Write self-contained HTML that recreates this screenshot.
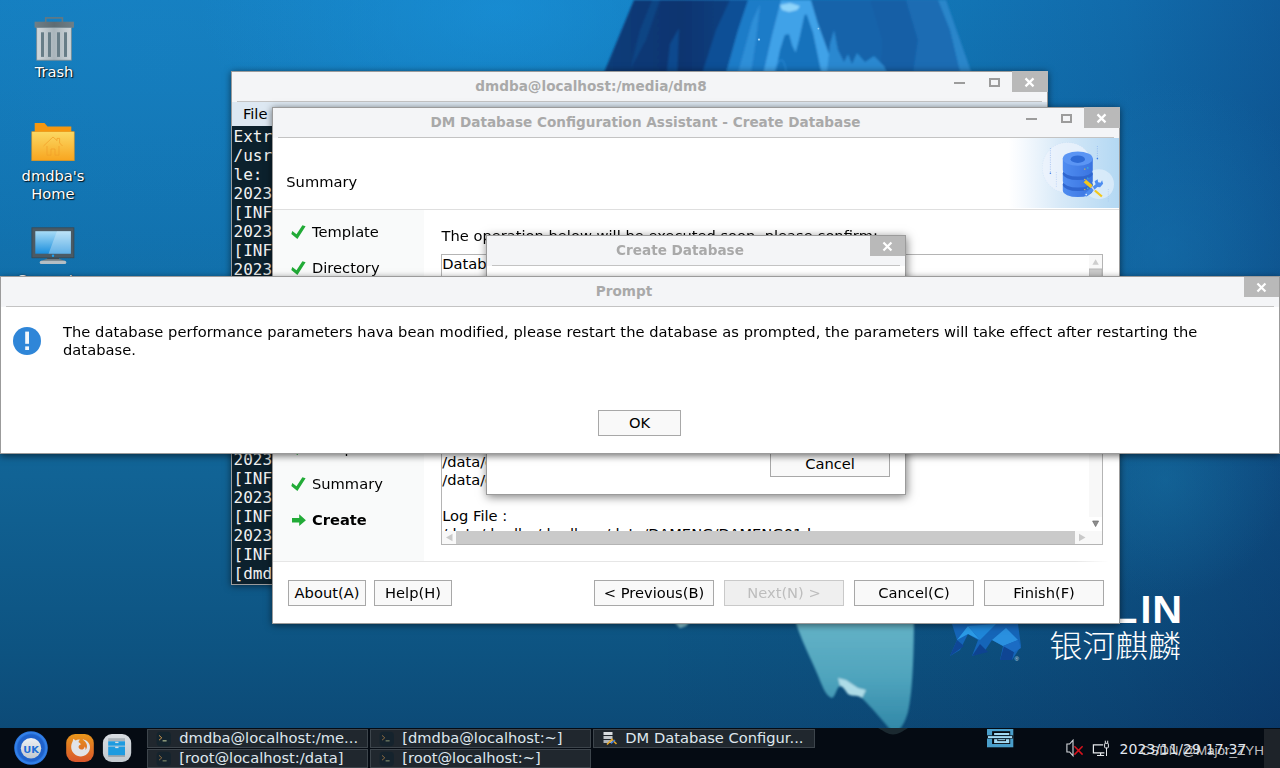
<!DOCTYPE html>
<html lang="en">
<head>
<meta charset="utf-8">
<title>Kylin Desktop - DM Database Configuration Assistant</title>
<style>
*{box-sizing:border-box;margin:0;padding:0}
html,body{width:1280px;height:768px;overflow:hidden}
body{position:relative;font-family:"DejaVu Sans","Liberation Sans",sans-serif;font-size:14.67px;color:#000;background:#0d5a92}
.abs{position:absolute}
#wall{position:absolute;left:0;top:0;width:1280px;height:768px}
/* desktop icons */
.dlabel{position:absolute;color:#fff;text-align:center;white-space:nowrap;text-shadow:1px 1px 1px rgba(0,0,0,.85),0 0 2px rgba(0,0,0,.5);line-height:18px}
/* windows */
.win{position:absolute;background:#fff;border:1px solid #9b9b9b;box-shadow:0 1px 7px rgba(0,0,0,.55)}
.tbar{position:absolute;left:0;top:0;right:0;height:30px;background:#f4f5f7}
.tbar .sep{position:absolute;left:5px;right:5px;bottom:0;height:1px;background:#c3c3c3}
.ttl{position:absolute;top:0;height:29px;line-height:28px;text-align:center;font-weight:bold;font-size:13.6px;color:#a9a9a9;white-space:nowrap}
.cls{position:absolute;top:0;right:0;width:35px;height:20px;background:#b9b9b9}
.cls svg,.wb svg{position:absolute;left:0;top:0}
.cls.out{top:-1px;right:-1px;width:36px;height:21px}
.wb{position:absolute;top:0;width:35px;height:20px}
.btn{position:absolute;height:26px;border:1px solid #a8a8a8;background:#f9f9f9;text-align:center;line-height:23px;white-space:nowrap;color:#000}
.btn.dis{background:#efefef;color:#bdbdbd;border-color:#c9c9c9}
/* terminal */
#term{left:231px;top:71px;width:817px;height:514px}
#term .menu{position:absolute;left:0;right:0;top:30px;height:24px;background:#dde8f2}
#term .scr{position:absolute;left:0;right:0;top:54px;bottom:0;background:#0c212d;color:#f2f2f2;font-family:"DejaVu Sans Mono","Liberation Mono",monospace;font-size:16px;line-height:19px;white-space:pre;padding:1px 0 0 1.5px;overflow:hidden}
/* dm window */
#dm{left:272px;top:107px;width:848px;height:517px}
.step{position:absolute;left:39px;white-space:nowrap;line-height:18px}
.step svg{position:absolute;left:-21px;top:2px}
/* taskbar */
#task{position:absolute;left:0;top:728px;width:1280px;height:40px;background:#050b13}
.tk{position:absolute;width:221px;height:19px;background:#20272e;border:1px solid #3d454c;color:#dfe7ee;line-height:16px;white-space:nowrap;overflow:hidden}
.tk span{position:absolute;left:31.3px;top:0}
.tk svg{position:absolute;left:8px;top:1px}
</style>
</head>
<body>
<svg id="wall" width="1280" height="768" viewBox="0 0 1280 768">
<defs>
<linearGradient id="wg" x1="0" y1="0" x2="0" y2="1">
<stop offset="0" stop-color="#137cbd"/><stop offset=".3" stop-color="#106fab"/><stop offset=".62" stop-color="#116395"/><stop offset=".85" stop-color="#0d5381"/><stop offset="1" stop-color="#0c4672"/>
</linearGradient>
<linearGradient id="wr" x1="0" y1="0" x2="1" y2="0">
<stop offset="0" stop-color="#06104a" stop-opacity="0"/><stop offset=".5" stop-color="#06104a" stop-opacity="0"/><stop offset=".75" stop-color="#06104a" stop-opacity=".07"/><stop offset=".88" stop-color="#06104a" stop-opacity=".16"/><stop offset="1" stop-color="#06104a" stop-opacity=".3"/>
</linearGradient>
<radialGradient id="wl" cx="0.12" cy="0.05" r="0.5">
<stop offset="0" stop-color="#2292d6" stop-opacity=".22"/><stop offset="1" stop-color="#2292d6" stop-opacity="0"/>
</radialGradient>
<radialGradient id="wm" cx="1165" cy="250" r="170" gradientUnits="userSpaceOnUse">
<stop offset="0" stop-color="#1a7ab8" stop-opacity=".38"/><stop offset="1" stop-color="#1a7ab8" stop-opacity="0"/>
</radialGradient>
<radialGradient id="wn" cx="1165" cy="480" r="120" gradientUnits="userSpaceOnUse">
<stop offset="0" stop-color="#1878ac" stop-opacity=".4"/><stop offset="1" stop-color="#1672aa" stop-opacity="0"/>
</radialGradient>
<linearGradient id="ice" x1="0" y1="0" x2="0" y2="1">
<stop offset="0" stop-color="#69b6c9"/><stop offset=".55" stop-color="#4fa4bd"/><stop offset="1" stop-color="#2f86a6"/>
</linearGradient>
<radialGradient id="wt" cx="500" cy="10" r="300" gradientUnits="userSpaceOnUse" gradientTransform="translate(500,10) scale(1,.55) translate(-500,-10)">
<stop offset="0" stop-color="#1a96e0" stop-opacity=".55"/><stop offset="1" stop-color="#1a96e0" stop-opacity="0"/>
</radialGradient>
<linearGradient id="icd" x1="0" y1="0" x2="1" y2="0"><stop offset="0" stop-color="#0a3d7a"/><stop offset=".55" stop-color="#083470"/><stop offset="1" stop-color="#0c4486"/></linearGradient>
<filter id="b1"><feGaussianBlur stdDeviation="1.2"/></filter>
<filter id="b3"><feGaussianBlur stdDeviation="3"/></filter>
</defs>
<rect width="1280" height="768" fill="url(#wg)"/>
<rect width="1280" height="768" fill="url(#wl)"/>
<rect width="1280" height="768" fill="url(#wr)"/>
<rect width="1280" height="768" fill="url(#wt)"/>
<rect width="1280" height="768" fill="url(#wm)"/>
<rect width="1280" height="768" fill="url(#wn)"/>
<!-- iceberg above water -->
<g filter="url(#b1)">
<path d="M601 80 L634 0 L946 0 L974 80Z" fill="#1a6cb4"/>
<path d="M601 80 L634 0 L748 0 L738 30 L724 80Z" fill="url(#icd)"/>
<path d="M666 80 L670 44 L679 28 L677 80Z" fill="#0f4a8e"/>
<path d="M640 30 L652 0 L660 0 L646 40 L630 70Z" fill="#0c4484"/>
<path d="M700 80 L716 30 L730 0 L748 0 L738 30 L724 80Z" fill="#0f4f96"/>
<path d="M724 80 L738 30 L748 0 L781 0 L772 35 L762 80Z" fill="#1f7cc8"/>
<path d="M736 80 L752 22 L760 4 L756 40 L750 80Z" fill="#2f8fd8"/>
<path d="M762 80 L764 70 L772 35 L780 4 L781 0 L811 0 L817.5 22 L835 70 L838 80Z" fill="#41a2e8"/>
<path d="M775 80 L776 70 L780 50 L784.7 35 L789 34 L792 45 L795.6 52.5 L799 40 L804.4 15.3 L806.6 14.2 L813 32.8 L820.8 70 L823 80Z" fill="#1672bc"/>
<path d="M774 80 C775 66 779 60 781 60 C784 60 786 66 787 80" fill="none" stroke="#2b8bd6" stroke-width="1.2"/>
<path d="M780 5 L790 3 L800 6 L797 10 L789 12 L782 10Z" fill="#8ed4fa"/>
<path d="M838 80 L835 70 L817.5 22 L811 0 L870 0 L882 40 L880 80Z" fill="#1663aa"/>
<path d="M870 0 L906 0 L918 40 L912 80 L880 80 L882 40Z" fill="#175fa6"/>
<path d="M906 0 L940 0 L952 40 L960 80 L912 80 L918 40Z" fill="#1b6cb3"/>
<path d="M938 0 L946 0 L974 80 L962 80 L950 30Z" fill="#2a86ca"/>
<path d="M826 80 L830 44 L834 30 L838 50 L844 62 L848 54 L852 64 L857 53 L865 62 L874 56 L884 66 L890 80Z" fill="#2a88d0"/>
</g>
<circle cx="759" cy="39.6" r="1.1" fill="#bfe8ff" opacity=".85"/>
<circle cx="818.4" cy="28.6" r=".9" fill="#bfe8ff" opacity=".7"/>
<!-- underwater ice -->
<g filter="url(#b1)">
<path d="M792 610 L914 610 C914 650 913 690 908 712 C904 726 898 733 893 733 C884 722 872 708 862 698 C856 694 852 697 848 694 C845 690 843 686 840 686 C836 688 836 696 832 698 C826 696 823 688 819 678 C812 660 800 640 792 610Z" fill="url(#ice)"/>
<path d="M840 686 C843 686 845 690 848 694 C852 697 856 694 862 698 L866 690 L858 688 L852 684 L846 680 L838 678Z" fill="#bfe6ee" opacity=".85"/>
<path d="M672 620 L692 620 L686 626 L680 628Z" fill="#8ecbd8"/>
</g>
<!-- kylin logo -->
<g>
<path d="M952 624 L1018 624 L1021 646 L1012 660 L1000 660 L1003 646 L992 640 L984 652 L972 656 L978 640 L968 634 L960 650 L950 656 L957 640Z" fill="#1565b8"/>
<path d="M957 640 L968 626 L980 640 L968 634Z" fill="#2b9be6"/>
<path d="M968 626 L996 624 L980 640Z" fill="#1f86d8"/>
<path d="M992 640 L1006 628 L1018 640 L1003 646Z" fill="#2a90df"/>
<path d="M950 656 L957 640 L964 646Z" fill="#0f4796"/>
<path d="M972 656 L980 644 L988 652Z" fill="#0e4391"/>
<path d="M1000 660 L1004 646 L1014 652 L1012 660Z" fill="#0f4593"/>
<path d="M1003 646 L1018 640 L1021 648 L1014 652Z" fill="#1b6cc4"/>
<text x="1014.5" y="660.5" font-family="Liberation Sans,sans-serif" font-size="6" fill="#cfe0f0">®</text>
</g>
<g fill="#fff" font-family="Liberation Sans,DejaVu Sans,sans-serif" font-weight="bold" font-size="39">
<text transform="translate(1042,623.4) scale(1.25,1)">KY</text>
<text transform="translate(1106.8,623.4) scale(1.3,1)">L</text>
<text x="1140.5" y="623.4">I</text>
<text transform="translate(1152.3,623.4) scale(1.06,1)">N</text>
</g>
<text x="1049.5" y="657" fill="#fff" font-family="Noto Sans CJK SC,WenQuanYi Zen Hei,sans-serif" font-weight="300" font-size="30.5" textLength="131.5" lengthAdjust="spacingAndGlyphs">银河麒麟</text>
</svg>

<!-- Trash -->
<svg class="abs" style="left:30px;top:14px" width="48" height="50" viewBox="0 0 48 50">
<defs>
<linearGradient id="tb" x1="0" y1="0" x2="1" y2="0"><stop offset="0" stop-color="#d2d9dd"/><stop offset=".5" stop-color="#a9b5bb"/><stop offset="1" stop-color="#cfd6da"/></linearGradient>
<linearGradient id="tl" x1="0" y1="0" x2="1" y2="0"><stop offset="0" stop-color="#6f7f87"/><stop offset=".5" stop-color="#5e6c73"/><stop offset="1" stop-color="#6f7f87"/></linearGradient>
</defs>
<rect x="15.7" y="3.9" width="16.7" height="5" fill="none" stroke="#667880" stroke-width="1.6"/>
<rect x="4.6" y="7.7" width="39.3" height="6" fill="url(#tl)"/>
<rect x="6.7" y="13.6" width="34.6" height="32.6" fill="url(#tb)" stroke="#7d8a91" stroke-width=".8"/>
<rect x="11" y="18.3" width="3" height="24.6" fill="#677d87"/>
<rect x="18" y="18.3" width="3" height="24.6" fill="#677d87"/>
<rect x="27" y="18.3" width="3" height="24.6" fill="#677d87"/>
<rect x="34" y="18.3" width="3" height="24.6" fill="#677d87"/>
</svg>
<div class="dlabel" style="left:14px;width:80px;top:63px">Trash</div>
<!-- Home -->
<svg class="abs" style="left:28px;top:118px" width="50" height="46" viewBox="0 0 50 46">
<defs>
<linearGradient id="ff" x1="0" y1="0" x2="0" y2="1"><stop offset="0" stop-color="#fbd964"/><stop offset="1" stop-color="#f8a51f"/></linearGradient>
</defs>
<path d="M6.7 5.1 L16.5 5.1 L19.5 8.6 L43.3 8.6 L43.3 16 L6.7 16Z" fill="#f6970f"/>
<rect x="3.8" y="13.7" width="42.4" height="29" fill="url(#ff)" stroke="#e8961a" stroke-width=".6"/>
<path d="M15.5 28 L25 19 L29 22.6 L29 20.4 L31.6 20.4 L31.6 25 L34.5 28 M19 28 L19 37.2 L23 37.2 L23 31 L27 31 L27 37.2 L31 37.2 L31 28" fill="none" stroke="#f2a12a" stroke-width="1" opacity=".8"/>
</svg>
<div class="dlabel" style="left:3px;width:100px;top:167px">dmdba's<br>Home</div>
<!-- Computer -->
<svg class="abs" style="left:28px;top:224px" width="50" height="44" viewBox="0 0 50 44">
<defs>
<linearGradient id="cs" x1="0" y1="0" x2="0" y2="1"><stop offset="0" stop-color="#a8dcf7"/><stop offset="1" stop-color="#1b8fdd"/></linearGradient>
</defs>
<rect x="3.9" y="3.8" width="42" height="30" fill="#4b5a64" stroke="#3a4851" stroke-width=".8"/>
<rect x="7.3" y="7.2" width="35.6" height="22.5" fill="url(#cs)"/>
<path d="M29 7.2 L42.9 7.2 L42.9 29.7 L20.5 29.7Z" fill="#e4f2fa" opacity=".35"/>
<circle cx="25" cy="31.8" r="1.2" fill="#1ba1f2"/>
<rect x="19.2" y="34" width="11.8" height="2.8" fill="#2f3b43"/>
<path d="M13 37 L19 34.8 L31 34.8 L37 37Z" fill="#6d7b83"/>
<rect x="11.7" y="36.7" width="26.6" height="3.4" rx="1.6" fill="#b4bec4"/>
</svg>
<div class="dlabel" style="left:3px;width:100px;top:271px">Computer</div>

<div class="win" id="term">
<div class="tbar"><div class="sep"></div>
<div class="ttl" style="left:0;width:718px">dmdba@localhost:/media/dm8</div>
<div class="wb" style="right:70px"><svg width="35" height="20"><rect x="12" y="10" width="11" height="2" fill="#9c9c9c"/></svg></div>
<div class="wb" style="right:35px"><svg width="35" height="20"><rect x="13" y="7" width="9" height="7" fill="none" stroke="#9c9c9c" stroke-width="2"/></svg></div>
<div class="cls out"><svg width="36" height="21"><path d="M13.5 7.4 L21.5 15.4 M21.5 7.4 L13.5 15.4" stroke="#fff" stroke-width="2.2" fill="none"/></svg></div>
</div>
<div class="menu"><span class="abs" style="left:10.9px;top:2px;line-height:20px">File</span></div>
<div class="scr">Extracting...
/usr/bin/java
le: 
2023-11-29
[INFO] dbca
2023-11-29
[INFO] dbca
2023-11-29
[INFO] dbca
2023-11-29
[INFO] dbca
2023-11-29
[INFO] dbca
2023-11-29
[INFO] dbca
2023-11-29
[INFO] dbca
2023-11-29
[INFO] dbca
2023-11-29
[INFO] dbca
2023-11-29
[INFO] dbca
[dmdba@localhost dm8]$ </div>
</div>

<div class="win" id="dm">
<div class="tbar"><div class="sep"></div>
<div class="ttl" style="left:0;width:745px">DM Database Configuration Assistant - Create Database</div>
<div class="wb" style="right:70px"><svg width="35" height="20"><rect x="12" y="10" width="11" height="2" fill="#9c9c9c"/></svg></div>
<div class="wb" style="right:35px"><svg width="35" height="20"><rect x="13" y="7" width="9" height="7" fill="none" stroke="#9c9c9c" stroke-width="2"/></svg></div>
<div class="cls out"><svg width="36" height="21"><path d="M13.5 7.4 L21.5 15.4 M21.5 7.4 L13.5 15.4" stroke="#fff" stroke-width="2.2" fill="none"/></svg></div>
</div>
<!-- header -->
<div class="abs" style="left:13.3px;top:65px;line-height:18px">Summary</div>
<svg class="abs" style="left:736px;top:30px" width="110" height="70" viewBox="0 0 110 70">
<defs>
<linearGradient id="bn" x1="0" y1="0" x2="1" y2="0"><stop offset="0" stop-color="#fff"/><stop offset=".12" stop-color="#f6fafe"/><stop offset=".45" stop-color="#d9eaf8"/><stop offset="1" stop-color="#b3d8f3"/></linearGradient>
<linearGradient id="cy" x1="0" y1="0" x2="1" y2="0"><stop offset="0" stop-color="#4f8cf0"/><stop offset="1" stop-color="#3a74e0"/></linearGradient>
</defs>
<rect width="110" height="70" fill="url(#bn)"/>
<circle cx="58.5" cy="29.6" r="25.2" fill="#eef4fd" opacity=".75" stroke="#b9d3f4" stroke-width=".4" stroke-dasharray="1 1.5"/>
<circle cx="90" cy="46.2" r="15" fill="#e3effb" opacity=".7"/>
<path d="M41.4 10 V35" stroke="#7fa9ee" stroke-width=".6" stroke-dasharray="1 1.3"/><circle cx="41.4" cy="35.3" r=".8" fill="#3a7be6"/>
<path d="M88.4 8 V20" stroke="#7fa9ee" stroke-width=".6" stroke-dasharray="1 1.3"/><circle cx="88.4" cy="20.6" r=".8" fill="#3a7be6"/>
<path d="M47.4 34 V49" stroke="#a8c6f3" stroke-width=".6" stroke-dasharray="1 1.3"/>
<path d="M99.4 51 V64" stroke="#a8c6f3" stroke-width=".6" stroke-dasharray="1 1.3"/>
<!-- cylinders --><g transform="translate(-1.2,-.4)">
<path d="M55 47 V53 A15 6.5 0 0 0 85 53 V47Z" fill="url(#cy)"/>
<ellipse cx="70" cy="47" rx="15" ry="6.5" fill="#2f66cf"/>
<path d="M55 36 V43.5 A15 6.5 0 0 0 85 43.5 V36Z" fill="url(#cy)"/>
<ellipse cx="70" cy="36" rx="15" ry="6.5" fill="#2f66cf"/>
<path d="M55 21 V32.5 A15 6.5 0 0 0 85 32.5 V21Z" fill="url(#cy)"/>
<ellipse cx="70" cy="21" rx="15" ry="7.2" fill="#5b95f4"/>
<ellipse cx="70" cy="21.6" rx="7.2" ry="3.7" fill="#2f6bd6"/>
<circle cx="77" cy="31.5" r=".7" fill="#f1c436"/><circle cx="80" cy="30.3" r=".7" fill="#2ed3d8"/>
<circle cx="77" cy="41.8" r=".7" fill="#f1c436"/><circle cx="80" cy="40.5" r=".7" fill="#2ed3d8"/>
<circle cx="77" cy="52" r=".7" fill="#f1c436"/><circle cx="80" cy="50.6" r=".7" fill="#2ed3d8"/>
</g><g transform="translate(-4.4,.8)"><!-- wrench -->
<path d="M80 55 L91 45.5 L90 42.5 L93 40.5 L93.5 43.5 L96 44 L97.5 41.5 L98.5 45 L95.5 48.5 L92.8 48.3 L82.5 57.5 A2 2 0 0 1 80 55Z" fill="#4d8df0"/>
<circle cx="81.6" cy="55.8" r=".8" fill="#e8f1fd"/>
<!-- screwdriver -->
<path d="M79 43.5 L81.5 41 L88 46.5 L86 49.5Z" fill="#f3c81a"/>
<path d="M89.5 52.5 L91 51 L98 57 L96.5 58.5Z" fill="#f3c81a"/>
<path d="M86.5 48.5 L87.8 47.2 L90.5 51.8 L89.8 52.4Z" fill="#d0d8e4"/></g>
</svg>
<div class="abs" style="left:0;top:101px;width:846px;height:1px;background:#dfdfdf"></div>
<!-- sidebar -->
<div class="abs" style="left:0;top:102px;width:151px;height:351px;background:#f9fafa"></div>
<div class="step" style="top:115px"><svg width="16" height="15"><path d="M.3 8.9 L1.3 6 L5.5 9.25 L11.4 .3 L14.6 1.3 L6.4 13.9Z" fill="#22ab37"/></svg>Template</div>
<div class="step" style="top:151px"><svg width="16" height="15"><path d="M.3 8.9 L1.3 6 L5.5 9.25 L11.4 .3 L14.6 1.3 L6.4 13.9Z" fill="#22ab37"/></svg>Directory</div>
<div class="step" style="top:187px"><svg width="16" height="15"><path d="M.3 8.9 L1.3 6 L5.5 9.25 L11.4 .3 L14.6 1.3 L6.4 13.9Z" fill="#22ab37"/></svg>Identifier</div>
<div class="step" style="top:223px"><svg width="16" height="15"><path d="M.3 8.9 L1.3 6 L5.5 9.25 L11.4 .3 L14.6 1.3 L6.4 13.9Z" fill="#22ab37"/></svg>Files</div>
<div class="step" style="top:259px"><svg width="16" height="15"><path d="M.3 8.9 L1.3 6 L5.5 9.25 L11.4 .3 L14.6 1.3 L6.4 13.9Z" fill="#22ab37"/></svg>Parameters</div>
<div class="step" style="top:295px"><svg width="16" height="15"><path d="M.3 8.9 L1.3 6 L5.5 9.25 L11.4 .3 L14.6 1.3 L6.4 13.9Z" fill="#22ab37"/></svg>Password</div>
<div class="step" style="top:331px"><svg width="16" height="15"><path d="M.3 8.9 L1.3 6 L5.5 9.25 L11.4 .3 L14.6 1.3 L6.4 13.9Z" fill="#22ab37"/></svg>Sample</div>
<div class="step" style="top:367px"><svg width="16" height="15"><path d="M.3 8.9 L1.3 6 L5.5 9.25 L11.4 .3 L14.6 1.3 L6.4 13.9Z" fill="#22ab37"/></svg>Summary</div>
<div class="step" style="top:403px;font-weight:bold"><svg width="16" height="15"><path d="M1 5 H8.2 V1.3 L14.9 7.2 L8.2 13 V9.4 H1Z" fill="#22ab37"/></svg>Create</div>
<!-- main -->
<div class="abs" style="left:168.6px;top:119px;line-height:18px;white-space:nowrap">The operation below will be executed soon, please confirm:</div>
<div class="abs" id="ta" style="left:168px;top:146px;width:662px;height:291px;border:1px solid #b4b4b4;background:#fff;overflow:hidden">
<div class="abs" style="left:0.2px;top:0px;line-height:18px;white-space:pre">Database Name : DAMENG
Instance Name : DMSERVER
Port : 5236
Database Directory : /data/dmdba/dmdbms/data
Database Template : General Purpose

Control Files :
/data/dmdba/dmdbms/data/DAMENG/dm.ctl

Data Files :
/data/dmdba/dmdbms/data/DAMENG/SYSTEM.DBF
/data/dmdba/dmdbms/data/DAMENG/ROLL.DBF
/data/dmdba/dmdbms/data/DAMENG/MAIN.DBF

Log File :
/data/dmdba/dmdbms/data/DAMENG/DAMENG01.log</div>
<!-- v scrollbar -->
<div class="abs" style="right:0;top:0;width:13px;height:262px;background:#f8f8f8"></div>
<svg class="abs" style="right:0;top:0" width="13" height="276"><path d="M3.4 9.8 L6.6 4.2 L9.8 9.8Z" fill="#cdcdcd"/><rect x="0" y="14" width="13" height="150" fill="#cacaca" stroke="#b5b5b5" stroke-width="1"/><path d="M3.6 266 L9.6 266 L6.6 271.6Z" fill="#8e8e8e" stroke="#6a6a6a" stroke-width=".7"/></svg>
<!-- h scrollbar -->
<div class="abs" style="left:0;bottom:0;width:660px;height:13px;background:#f8f8f8"></div>
<svg class="abs" style="left:0;bottom:0" width="660" height="13"><path d="M10.5 2.8 L4 6.5 L10.5 10.2Z" fill="#c9c9c9"/><rect x="14" y="0" width="619" height="13" fill="#cacaca"/><path d="M637 2.8 L643.5 6.5 L637 10.2Z" fill="#c9c9c9"/></svg>
</div>
<!-- bottom -->
<div class="abs" style="left:0;top:453px;width:836px;height:1px;background:linear-gradient(90deg,#e6e6e6 0,#e6e6e6 96%,#fff 100%)"></div>
<div class="btn" style="left:15px;top:472px;width:78px">About(A)</div>
<div class="btn" style="left:101px;top:472px;width:78px">Help(H)</div>
<div class="btn" style="left:321px;top:472px;width:120px">&lt; Previous(B)</div>
<div class="btn dis" style="left:451px;top:472px;width:120px">Next(N) &gt;</div>
<div class="btn" style="left:581px;top:472px;width:120px">Cancel(C)</div>
<div class="btn" style="left:711px;top:472px;width:120px">Finish(F)</div>
</div>

<div class="win" id="cd" style="left:486px;top:235px;width:420px;height:260px;box-shadow:1px 2px 9px rgba(0,0,0,.5)">
<div class="tbar"><div class="sep"></div>
<div class="ttl" style="left:0;width:386px">Create Database</div>
<div class="cls"><svg width="35" height="20"><path d="M13.45 6.45 L21.45 14.45 M21.45 6.45 L13.45 14.45" stroke="#fff" stroke-width="2.2" fill="none"/></svg></div>
</div>
<div class="abs" style="left:16px;top:52px;line-height:18px;white-space:nowrap">Create database successfully!</div>
<div class="btn" style="left:283px;top:215px;width:120px">Cancel</div>
</div>

<div class="win" id="pr" style="left:0;top:276px;width:1280px;height:178px;box-shadow:0 2px 7px rgba(0,0,0,.55)">
<div class="tbar"><div class="sep"></div>
<div class="ttl" style="left:0;width:1246px">Prompt</div>
<div class="cls"><svg width="35" height="20"><path d="M13.45 6.45 L21.45 14.45 M21.45 6.45 L13.45 14.45" stroke="#fff" stroke-width="2.2" fill="none"/></svg></div>
</div>
<svg class="abs" style="left:11px;top:49px" width="30" height="30"><circle cx="15" cy="15" r="14" fill="#2f86d8"/><rect x="13.2" y="5.6" width="3.8" height="12.2" fill="#f4f8fc"/><rect x="13.2" y="20.4" width="3.8" height="3.6" fill="#f4f8fc"/></svg>
<div class="abs" style="left:62px;top:46px;width:1180px;line-height:18px;letter-spacing:.044px">The database performance parameters hava bean modified, please restart the database as prompted, the parameters will take effect after restarting the database.</div>
<div class="btn" style="left:597px;top:133px;width:83px">OK</div>
</div>

<div id="task">
<svg class="abs" style="left:870px;top:0" width="46" height="10"><path d="M8 0 C14 3 18 6.5 23 6.5 C28 6.5 33 3 38 0Z" fill="#1b2930"/></svg>
<!-- start menu -->
<svg class="abs" style="left:13px;top:2px" width="36" height="36" viewBox="0 0 36 36">
<defs><radialGradient id="uk" cx=".5" cy=".5" r=".5"><stop offset="0" stop-color="#1d5cc6"/><stop offset=".78" stop-color="#1f62cc"/><stop offset=".9" stop-color="#3484ec"/><stop offset="1" stop-color="#2a74de"/></radialGradient>
<linearGradient id="uki" x1="0" y1="0" x2="0" y2="1"><stop offset="0" stop-color="#eef1f4"/><stop offset="1" stop-color="#c2c8ce"/></linearGradient></defs>
<circle cx="18" cy="18" r="16.8" fill="url(#uk)"/>
<circle cx="18" cy="18.3" r="10.2" fill="url(#uki)"/>
<text x="10.2" y="22.6" font-family="DejaVu Sans,Liberation Sans,sans-serif" font-weight="bold" font-size="9.2" fill="#1f6fd8" textLength="15.6" lengthAdjust="spacingAndGlyphs">UK</text>
</svg>
<!-- firefox -->
<svg class="abs" style="left:65px;top:5px" width="30" height="30" viewBox="0 0 30 30">
<defs><linearGradient id="fx" x1="0" y1="0" x2="0" y2="1"><stop offset="0" stop-color="#e8961b"/><stop offset="1" stop-color="#d9562c"/></linearGradient></defs>
<rect x="1.2" y="1" width="27.6" height="28" rx="9" fill="url(#fx)"/>
<path d="M7.6 8.6 L8.4 5.8 L10.6 7.6 C12 6.6 13.6 6.4 15 6.8 C13.8 7.6 13.4 8.6 13.8 9.6 C15 9.8 15.8 10.6 15.6 11.8 C14.6 12 13.8 12.6 13.6 13.6 C13.4 15.2 14.6 16.6 16.4 16.6 C18.2 16.6 19.6 15.2 19.6 13.4 C20.6 14.4 20.8 15.8 20.4 17 C22 15.6 22.4 13.2 21.6 11 C20.8 8.8 19 7.2 17.4 6.4 C20.6 6.4 23.6 8.6 24.6 11.8 C25.8 15.6 24.2 19.8 20.8 22 C17.2 24.2 12.4 23.8 9.2 20.8 C6 17.8 5.2 13 7.6 8.6Z" fill="#e1e4e8"/>
</svg>
<!-- file manager -->
<svg class="abs" style="left:102px;top:5px" width="30" height="30" viewBox="0 0 30 30">
<defs><linearGradient id="fm" x1="0" y1="0" x2="0" y2="1"><stop offset="0" stop-color="#d8dde2"/><stop offset="1" stop-color="#c2c9cf"/></linearGradient></defs>
<rect x=".9" y="1" width="28.3" height="28" rx="9" fill="url(#fm)"/>
<rect x="6.2" y="5.2" width="16.8" height="3.1" fill="#a9b2b9"/>
<rect x="6.2" y="8.3" width="16.8" height="4.5" fill="#1d9be0"/>
<rect x="6.2" y="12.8" width="16.8" height=".8" fill="#9fc4dc"/>
<rect x="6.2" y="13.6" width="16.8" height="8.8" fill="#1d9be0"/>
<rect x="6.2" y="22.4" width="16.8" height="1.3" fill="#8c979f"/>
<rect x="13.2" y="8.7" width="3.3" height="1.4" fill="#d6dde3"/>
<rect x="13.2" y="13.6" width="3.3" height="1.5" fill="#d6dde3"/>
</svg>
<!-- task buttons -->
<div class="tk" style="left:147px;top:1px"><svg width="16" height="16"><rect x=".5" y=".8" width="14.5" height="14.5" rx="4" fill="#14242d"/><path d="M3 4.4 L5.8 6.8 L3 9.2" stroke="#c7924e" stroke-width="1" fill="none"/><rect x="6.6" y="9.3" width="4" height="1.1" fill="#b9c79a"/></svg><span>dmdba@localhost:/me...</span></div>
<div class="tk" style="left:147px;top:21px"><svg width="16" height="16"><rect x=".5" y=".8" width="14.5" height="14.5" rx="4" fill="#14242d" opacity=".9"/><path d="M3 4.4 L5.8 6.8 L3 9.2" stroke="#8a6a42" stroke-width="1" fill="none"/><rect x="6.6" y="9.3" width="4" height="1.1" fill="#7f8a6c"/></svg><span>[root@localhost:/data]</span></div>
<div class="tk" style="left:370px;top:1px"><svg width="16" height="16"><rect x=".5" y=".8" width="14.5" height="14.5" rx="4" fill="#14242d" opacity=".9"/><path d="M3 4.4 L5.8 6.8 L3 9.2" stroke="#8a6a42" stroke-width="1" fill="none"/><rect x="6.6" y="9.3" width="4" height="1.1" fill="#7f8a6c"/></svg><span>[dmdba@localhost:~]</span></div>
<div class="tk" style="left:370px;top:21px"><svg width="16" height="16"><rect x=".5" y=".8" width="14.5" height="14.5" rx="4" fill="#14242d" opacity=".9"/><path d="M3 4.4 L5.8 6.8 L3 9.2" stroke="#8a6a42" stroke-width="1" fill="none"/><rect x="6.6" y="9.3" width="4" height="1.1" fill="#7f8a6c"/></svg><span>[root@localhost:~]</span></div>
<div class="tk" style="left:593px;top:1px;width:222px"><svg width="16" height="16"><rect x="1.5" y="1" width="9" height="3" fill="#d9dde1"/><rect x="1.5" y="5" width="9" height="3" fill="#c4c9ce"/><rect x="1.5" y="9" width="9" height="3" fill="#aeb4ba"/><path d="M5 13.5 L10 8.5 L14.5 13" stroke="#e2a62b" stroke-width="1.6" fill="none"/><path d="M9 12.5 L13 9" stroke="#3c78d8" stroke-width="1.4"/></svg><span>DM Database Configur...</span></div>
<!-- tray -->
<svg class="abs" style="left:986.9px;top:.9px" width="27" height="19" viewBox="0 0 27 19">
<rect width="26.3" height="18.3" fill="#4a9fcb"/>
<rect x="5.1" y="2.2" width="18.1" height="4.4" fill="#05090f"/>
<rect x="7.1" y="4" width="15.2" height="2" fill="#a3daf3"/>
<rect x="0" y="6.4" width="26.3" height="3.1" fill="#05090f"/>
<rect x=".9" y="7.1" width="24.3" height="1.9" fill="#a3daf3"/>
<rect x="5.1" y="9.5" width="18.1" height="5.5" fill="#05090f"/>
<rect x="7.1" y="10.2" width="15.2" height="3.9" fill="#a3daf3"/>
<rect x="10.3" y="10.2" width="8.7" height="1.9" fill="#05090f"/>
<rect x="11.2" y="10.2" width="6.9" height="1" fill="#a3daf3"/>
</svg>
<svg class="abs" style="left:1065px;top:11px" width="22" height="19" viewBox="0 0 22 19">
<path d="M1.9 5 H4.6 L8 1.2 V16.8 L4.6 13 H1.9Z" fill="none" stroke="#d5d8dc" stroke-width="1.1"/>
<path d="M9.4 7.3 L17.6 15.6 M17.6 7.3 L9.4 15.6" stroke="#d8121c" stroke-width="1.5"/>
</svg>
<svg class="abs" style="left:1090px;top:11px" width="22" height="19" viewBox="0 0 22 19">
<path d="M13.2 5.8 H3.4 V13.8 H14.4" fill="none" stroke="#e6e9ec" stroke-width="1.2"/>
<path d="M10.6 14 V16.4 M7 16.5 H14.1" stroke="#e6e9ec" stroke-width="1.2"/>
<rect x="14.6" y="4.3" width="3.8" height="4.6" rx=".8" fill="none" stroke="#e6e9ec" stroke-width="1"/>
<path d="M15.3 1.7 V4.3 M17.7 1.7 V4.3 M16.5 8.9 V17" stroke="#e6e9ec" stroke-width="1"/>
</svg>
<div class="abs" style="left:1119.4px;top:11.6px;font-size:14px;letter-spacing:.1px;color:#e3e9f2;line-height:18px;white-space:nowrap">2023/11/29 17:37</div>
<div class="abs" style="left:1140.5px;top:13.5px;font-family:'Liberation Sans','DejaVu Sans',sans-serif;font-size:13.45px;color:rgba(225,225,225,.85);line-height:18px;white-space:nowrap">CSDN @Major_ZYH</div>
<div class="abs" style="left:1264px;top:1px;width:16px;height:39px;background:#1e2329"></div>
</div>

</body>
</html>
